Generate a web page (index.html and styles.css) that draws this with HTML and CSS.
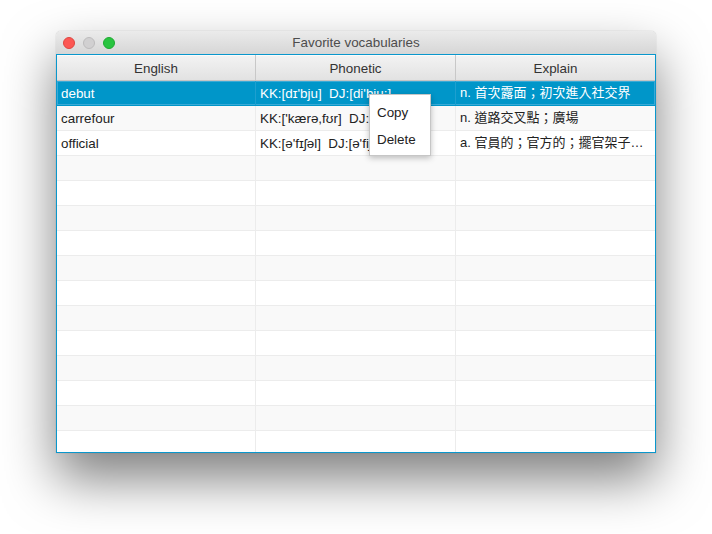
FILE: index.html
```html
<!DOCTYPE html>
<html>
<head>
<meta charset="utf-8">
<title>Favorite vocabularies</title>
<link rel="stylesheet" href="styles.css">
</head>
<body>
<div class="stage">
  <div class="window">
    <div class="titlebar">
      <div class="lights">
        <span class="light red"></span>
        <span class="light gray"></span>
        <span class="light green"></span>
      </div>
      <div class="title">Favorite vocabularies</div>
    </div>
    <div class="table">
      <div class="row header">
        <div class="cell">English</div>
        <div class="cell">Phonetic</div>
        <div class="cell">Explain</div>
      </div>
      <div class="row selected">
        <div class="cell">debut</div>
        <div class="cell">KK:[dɪ'bju]  DJ:[di'bju:]</div>
        <div class="cell">n. 首次露面；初次進入社交界</div>
      </div>
      <div class="row odd">
        <div class="cell">carrefour</div>
        <div class="cell">KK:['kærə,fʊr]  DJ:['kærəfuə]</div>
        <div class="cell">n. 道路交叉點；廣場</div>
      </div>
      <div class="row">
        <div class="cell">official</div>
        <div class="cell">KK:[ə'fɪʃəl]  DJ:[ə'fiʃəl]</div>
        <div class="cell">a. 官員的；官方的；擺官架子的；</div>
      </div>
      <div class="row odd"><div class="cell"></div><div class="cell"></div><div class="cell"></div></div>
      <div class="row"><div class="cell"></div><div class="cell"></div><div class="cell"></div></div>
      <div class="row odd"><div class="cell"></div><div class="cell"></div><div class="cell"></div></div>
      <div class="row"><div class="cell"></div><div class="cell"></div><div class="cell"></div></div>
      <div class="row odd"><div class="cell"></div><div class="cell"></div><div class="cell"></div></div>
      <div class="row"><div class="cell"></div><div class="cell"></div><div class="cell"></div></div>
      <div class="row odd"><div class="cell"></div><div class="cell"></div><div class="cell"></div></div>
      <div class="row"><div class="cell"></div><div class="cell"></div><div class="cell"></div></div>
      <div class="row odd"><div class="cell"></div><div class="cell"></div><div class="cell"></div></div>
      <div class="row"><div class="cell"></div><div class="cell"></div><div class="cell"></div></div>
      <div class="row odd"><div class="cell"></div><div class="cell"></div><div class="cell"></div></div>
      <div class="row last"><div class="cell"></div><div class="cell"></div><div class="cell"></div></div>
    </div>
    <div class="menu">
      <div class="item">Copy</div>
      <div class="item">Delete</div>
    </div>
  </div>
</div>
</body>
</html>
```
FILE: styles.css
```css
html, body {
  margin: 0;
  padding: 0;
  background: #ffffff;
}
body {
  font-family: "Liberation Sans", Arial, "Noto Sans CJK TC", sans-serif;
  font-size: 13.4px;
  color: #333333;
  min-height: 534px;
}
.stage {
  padding: 31px 0 0 56px;
  height: 534px;
  box-sizing: border-box;
}
.window {
  position: relative;
  width: 600px;
  border-radius: 5px 5px 0 0;
  box-shadow: 0 26px 52px rgba(0, 0, 0, 0.5), 0 0 1px rgba(0,0,0,0.35);
  background: #ffffff;
}
.titlebar {
  height: 23px;
  border-radius: 5px 5px 0 0;
  background: linear-gradient(#ebebeb, #d6d6d6);
  display: flex;
  align-items: center;
  justify-content: center;
  position: relative;
}
.lights {
  position: absolute;
  left: 7px;
  top: 6px;
  display: flex;
  gap: 8px;
}
.light {
  width: 12px;
  height: 12px;
  border-radius: 50%;
  box-sizing: border-box;
}
.red { background: #fc5753; border: 1px solid #de4640; }
.gray { background: #d1d0d1; border: 1px solid #bdbcbd; }
.green { background: #29c440; border: 1px solid #1eab31; }
.title {
  color: #4d4d4d;
}
.table {
  border: 1px solid #0a97cc;
  background: #ffffff;
  height: 397px;
  overflow: hidden;
}
.row {
  display: grid;
  grid-template-columns: 199px 200px 1fr;
  height: 25px;
  box-sizing: border-box;
  border-bottom: 1px solid #ececec;
  background: #ffffff;
}
.row.odd {
  background: #f9f9f9;
}
.cell {
  border-right: 1px solid #ececec;
  padding-left: 4px;
  display: flex;
  align-items: center;
  white-space: pre;
  overflow: hidden;
  color: #222222;
}
.cell:last-child {
  border-right: none;
  display: block;
  line-height: 24px;
  text-overflow: ellipsis;
  padding-right: 6px;
  font-size: 13px;
}
.header {
  height: 26px;
  background: linear-gradient(#f3f3f3, #e2e2e2);
  border-bottom: 1px solid #c4c4c4;
  box-shadow: inset 0 1px 0 #fbfbfb;
}
.header .cell {
  justify-content: center;
  padding-left: 0;
  padding-top: 1px;
  border-right: 1px solid #c8c8c8;
  color: #333333;
}
.header .cell:last-child {
  text-align: center;
  line-height: 25px;
  padding-right: 0;
  border-right: none;
  font-size: 13.4px;
}
.row.selected {
  background: #0096c9;
  box-shadow: inset 0 0 0 1px #3aaad6;
  border-bottom: 1px solid #0096c9;
}
.selected .cell {
  color: #ffffff;
  border-right-color: #1e9fcf;
}
.menu {
  position: absolute;
  left: 313px;
  top: 63px;
  width: 62px;
  height: 62px;
  box-sizing: border-box;
  background: #ffffff;
  border: 1px solid #c6c6c6;
  box-shadow: 0 2px 6px rgba(0, 0, 0, 0.25);
  padding-top: 5px;
}
.item {
  height: 27px;
  line-height: 26px;
  padding-left: 7px;
  color: #222222;
}
```
